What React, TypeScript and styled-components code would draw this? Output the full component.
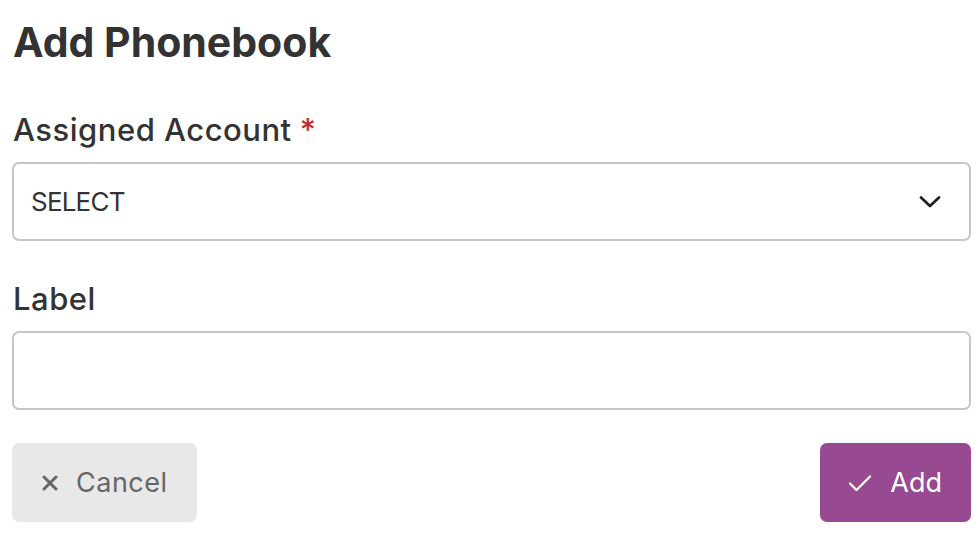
import styled, { createGlobalStyle } from "styled-components";

const GlobalStyle = createGlobalStyle`
  html, body {
    margin: 0;
    padding: 0;
    background: #ffffff;
  }
  body {
    font-family: "Inter", "Open Sans", sans-serif;
    color: #333333;
  }
`;

const Form = styled.form`
  display: flex;
  flex-direction: column;
  padding: 12px 9px 0 12px;
`;

const Title = styled.h1`
  margin: 0 0 0 1px;
  font-size: 41px;
  line-height: 60px;
  font-weight: 700;
  color: #333333;
`;

const Field = styled.div<{ $top: number }>`
  display: flex;
  flex-direction: column;
  margin-top: ${(p) => p.$top}px;
`;

const FieldLabel = styled.label`
  font-size: 31px;
  line-height: 40px;
  letter-spacing: 0.5px;
  font-weight: 500;
  color: #333333;
  margin: 0 0 12px 1px;
`;

const Required = styled.span`
  color: #c62828;
  margin-left: 8px;
`;

const SelectBox = styled.div`
  display: flex;
  align-items: center;
  justify-content: space-between;
  height: 79px;
  box-sizing: border-box;
  border: 2px solid #c6c6c6;
  border-radius: 7px;
  padding: 0 28px 0 17px;
  font-size: 26px;
  letter-spacing: -0.8px;
  color: #333333;
`;

const TextInput = styled.input`
  height: 79px;
  box-sizing: border-box;
  border: 2px solid #c6c6c6;
  border-radius: 7px;
  padding: 0 17px;
  font-size: 27px;
  font-family: inherit;
  outline: none;
`;

const Actions = styled.div`
  display: flex;
  justify-content: space-between;
  margin-top: 33px;
`;

const Button = styled.button<{ $primary?: boolean }>`
  display: flex;
  align-items: center;
  gap: 18px;
  height: 79px;
  border: none;
  border-radius: 7px;
  padding: ${(p) => (p.$primary ? "0 29px 0 28px" : "0 29px 0 30px")};
  font-family: inherit;
  font-size: 27px;
  letter-spacing: ${(p) => (p.$primary ? "0" : "0.5px")};
  background: ${(p) => (p.$primary ? "#974a92" : "#e8e8e8")};
  color: ${(p) => (p.$primary ? "#ffffff" : "#666666")};
  cursor: pointer;
`;

const Chevron = () => (
  <svg width="22" height="14" viewBox="0 0 22 14" fill="none">
    <path d="M2 2.5 L11 11 L20 2.5" stroke="#222" strokeWidth="2.8" strokeLinecap="round" strokeLinejoin="round" />
  </svg>
);

const CrossIcon = () => (
  <svg width="16" height="16" viewBox="0 0 16 16" fill="none">
    <path d="M2 2 L14 14 M14 2 L2 14" stroke="#666" strokeWidth="3" strokeLinecap="round" />
  </svg>
);

const CheckIcon = () => (
  <svg width="24" height="18" viewBox="0 0 24 18" fill="none">
    <path d="M2 9.5 L8.5 16 L22 2.5" stroke="#fff" strokeWidth="2.2" strokeLinecap="round" strokeLinejoin="round" />
  </svg>
);

export default function App() {
  return (
    <>
      <GlobalStyle />
      <Form onSubmit={(e) => e.preventDefault()}>
        <Title>Add Phonebook</Title>
        <Field $top={38}>
          <FieldLabel>
            Assigned Account<Required>*</Required>
          </FieldLabel>
          <SelectBox>
            <span>SELECT</span>
            <Chevron />
          </SelectBox>
        </Field>
        <Field $top={38}>
          <FieldLabel>Label</FieldLabel>
          <TextInput type="text" />
        </Field>
        <Actions>
          <Button type="button">
            <CrossIcon />
            Cancel
          </Button>
          <Button type="button" $primary>
            <CheckIcon />
            Add
          </Button>
        </Actions>
      </Form>
    </>
  );
}
